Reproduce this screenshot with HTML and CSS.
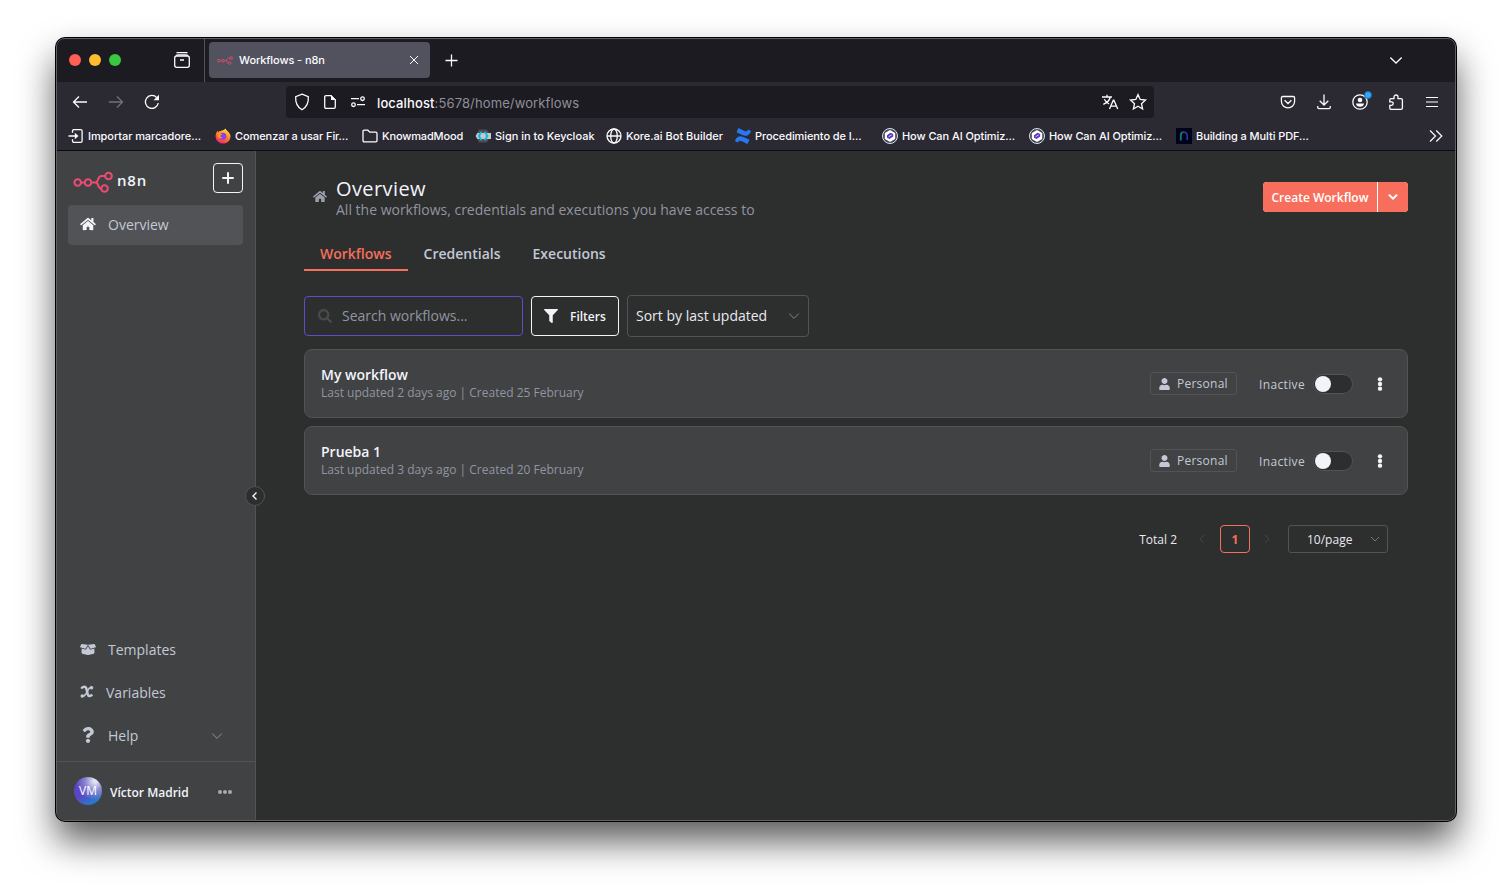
FILE: index.html
```html
<!DOCTYPE html>
<html lang="en">

<head>
  <meta charset="UTF-8" />
  <meta name="viewport" content="width=device-width, initial-scale=1.0" />
  <title>Workflows - n8n</title>
  <link rel="stylesheet" href="styles.css">
</head>

<body>
  <!-- shared icons -->
  <svg class="defs" width="0" height="0">
    <symbol id="home" viewBox="0 0 576 512"><path d="M280.37 148.26L96 300.11V464a16 16 0 0 0 16 16l112.06-.29a16 16 0 0 0 15.92-16V368a16 16 0 0 1 16-16h64a16 16 0 0 1 16 16v95.64a16 16 0 0 0 16 16.05L464 480a16 16 0 0 0 16-16V300L295.67 148.26a12.19 12.19 0 0 0-15.3 0zM571.6 251.47L488 182.56V44.05a12 12 0 0 0-12-12h-56a12 12 0 0 0-12 12v72.61L318.47 43a48 48 0 0 0-61 0L4.34 251.47a12 12 0 0 0-1.6 16.9l25.5 31A12 12 0 0 0 45.15 301l235.22-193.74a12.19 12.19 0 0 1 15.3 0L530.9 301a12 12 0 0 0 16.9-1.6l25.5-31a12 12 0 0 0-1.7-16.93z"/></symbol>
    <symbol id="user" viewBox="0 0 448 512"><path d="M224 256c70.7 0 128-57.3 128-128S294.7 0 224 0 96 57.3 96 128s57.3 128 128 128zm89.6 32h-16.7c-22.2 10.2-46.9 16-72.9 16s-50.6-5.8-72.9-16h-16.7C60.2 288 0 348.2 0 422.4V464c0 26.5 21.5 48 48 48h352c26.5 0 48-21.5 48-48v-41.6c0-74.2-60.2-134.4-134.4-134.4z"/></symbol>
    <symbol id="nodes" viewBox="0 0 40 22"><g fill="none" stroke="#ea4b71" stroke-width="2.1"><circle cx="4.7" cy="11.5" r="3.3"/><circle cx="15" cy="11.5" r="3.3"/><circle cx="35.5" cy="5" r="3.3"/><circle cx="31.5" cy="17.5" r="3.3"/><path d="M8 11.5h3.6M18.4 11.5h4.1c3.5 0 1.5-6.5 6-6.5h3.6M22.5 11.5c3.5 0 2 6 5.6 6"/></g></symbol>
    <symbol id="badge" viewBox="0 0 16 16"><circle cx="8" cy="8" r="7.5" fill="#3c4552" stroke="#dde1e8"/><path d="M8 2l5.2 3v6L8 14l-5.2-3V5z" fill="#fff"/><path d="M5 7.3l3.5-2.6 2.7 1.4v2.3L7.600 11 5 9.700z" fill="#5a35c8"/><path d="M6.600 8.700l3-1.700" stroke="#fff" stroke-width=".8"/></symbol>
    <symbol id="down" viewBox="0 0 12 12"><path d="M1.200 3.600L6 8.400l4.800-4.800" fill="none" stroke="currentColor"/></symbol>
    <symbol id="dots" viewBox="0 0 16 16"><circle cx="8" cy="2.700" r="2.500"/><circle cx="8" cy="8" r="2.500"/><circle cx="8" cy="13.300" r="2.500"/></symbol>
  </svg>

  <div class="window">
    <div class="tabbar">
      <div class="lights"><i class="red"></i><i class="yellow"></i><i class="green"></i></div>
      <svg class="line firefox-view" width="18" height="18" viewBox="0 0 18 18"><path d="M3.500 1.700h11"/><rect x="1.700" y="5" width="14.600" height="11.300" rx="2"/><path d="M3 4.700c.5-.7 1-.9 2-.9h8c1 0 1.500.2 2 .9M7 9h4"/></svg>
      <div class="separator"></div>
      <div class="tab">
        <svg width="16" height="9"><use href="#nodes"/></svg>
        <span>Workflows - n8n</span>
        <svg class="line" width="10" height="10" viewBox="0 0 10 10"><path d="M1 1l8 8M9 1L1 9" stroke-width="1"/></svg>
      </div>
      <svg class="line new-tab" width="13" height="13" viewBox="0 0 13 13"><path d="M6.500.5v12M.5 6.500h12"/></svg>
      <svg class="line all-tabs" width="14" height="14" viewBox="0 0 14 14"><path d="M1.300 4.500L7 10l5.700-5.500"/></svg>
    </div>

    <div class="toolbar">
      <div class="nav">
        <svg class="line" width="16" height="16" viewBox="0 0 16 16"><path d="M15 8H1.500M7 2.500L1.500 8 7 13.500"/></svg>
        <svg class="line dim" width="16" height="16" viewBox="0 0 16 16"><path d="M1 8h13.500M9 2.500L14.500 8 9 13.500"/></svg>
        <svg class="line" width="16" height="16" viewBox="0 0 16 16"><path d="M14.300 9A6.500 6.500 0 1 1 12.800 3.600"/><path d="M15 .8v5.500H9.500z" fill="currentColor" stroke="none"/></svg>
      </div>
      <div class="urlbar">
        <svg class="line" width="16" height="18" viewBox="0 0 16 18"><path d="M8 1.200l6.300 2.500c.4 5.300-1.100 10-6.300 13-5.200-3-6.700-7.700-6.300-13z"/></svg>
        <svg class="line page" width="14" height="16" viewBox="0 0 14 16"><path d="M3 1.700h5l4.300 4.300v7c0 .8-.5 1.300-1.300 1.300H3c-.8 0-1.300-.5-1.300-1.300V3c0-.8.5-1.300 1.300-1.300z"/><path d="M8 1l5 5H8z" fill="currentColor" stroke="none"/></svg>
        <svg class="line perms" width="16" height="12" viewBox="0 0 16 12"><path d="M1 2.700h8M7 8.700h8" stroke-width="1.300"/><circle cx="12.500" cy="2.700" r="1.800"/><circle cx="3.500" cy="8.700" r="1.800"/></svg>
        <div class="url"><b>localhost</b>:5678/home/workflows</div>
        <svg class="line translate" width="18" height="16" viewBox="0 0 18 16"><path d="M1 3h10M6 .8V3M9.300 3C8.600 6 5.500 9 2.300 10.300M3.300 5.200C4.500 7.500 6.300 9 8.200 10M8.500 15l3.800-8.800h.6L16.700 15M9.800 12.200h5.600"/></svg>
        <svg class="line" width="18" height="18" viewBox="0 0 18 18"><path d="M9 1.600l2.200 4.900 5.300.6-4 3.600 1.100 5.300L9 13.300 4.400 16l1.100-5.300-4-3.600 5.300-.6z"/></svg>
      </div>
      <div class="tools">
        <svg class="line" width="16" height="16" viewBox="0 0 16 16"><path d="M2.700 2.500h10.600c.8 0 1.300.5 1.300 1.300v3.500a6.600 6.600 0 0 1-13.200 0V3.800c0-.8.5-1.300 1.300-1.300zM4.600 6.300L8 9.500l3.400-3.200"/></svg>
        <svg class="line" width="16" height="16" viewBox="0 0 16 16"><path d="M8 .5v10.300M3.700 6.800L8 11l4.300-4.200M1.700 12v1.300c0 .9.500 1.400 1.400 1.400h9.800c.9 0 1.400-.5 1.400-1.400V12"/></svg>
        <span class="account">
          <svg class="line" width="16" height="16" viewBox="0 0 16 16"><circle cx="8" cy="8" r="7.200"/><circle cx="8" cy="6" r="2.300" fill="currentColor" stroke="none"/><path d="M4 9.500h8c0 2-1.700 3.300-4 3.300s-4-1.300-4-3.300z" fill="currentColor" stroke="none"/></svg>
          <i></i>
        </span>
        <svg class="line" width="16" height="18" viewBox="0 0 16 18"><path d="M3.200 5.700H6V4a2 2 0 0 1 4 0v1.700h3c.9 0 1.400.5 1.400 1.400v7.800c0 .9-.5 1.400-1.400 1.400H3.200c-.9 0-1.400-.5-1.400-1.400v-2.600h1.700a1.700 1.700 0 0 0 0-3.500H1.800V7.100c0-.9.500-1.400 1.400-1.400z"/></svg>
        <svg class="line burger" width="14" height="14" viewBox="0 0 14 14"><path d="M1 2.500h12M1 7h12M1 11.500h12" stroke-width="1.200"/></svg>
      </div>
    </div>

    <div class="bookmarks">
      <div class="bm bm1"><svg class="line" width="16" height="16" viewBox="0 0 16 16"><path d="M4.500 4.700V3c0-.9.500-1.400 1.400-1.400h6.800c.9 0 1.400.5 1.400 1.400v10c0 .9-.5 1.400-1.400 1.400H5.900c-.9 0-1.400-.5-1.400-1.400v-1.700M.5 8H9"/><path d="M6.800 4.700L10.500 8l-3.700 3.300z" fill="currentColor" stroke="none"/></svg>Importar marcadore...</div>
      <div class="bm bm2"><svg width="16" height="16" viewBox="0 0 16 16"><defs><linearGradient id="fox" x1=".8" y1="0" x2=".3" y2="1"><stop offset="0" stop-color="#fff044"/><stop offset=".45" stop-color="#ff8a1e"/><stop offset="1" stop-color="#f5206c"/></linearGradient></defs><path d="M10.500.5c.5 1.500 1.700 2.200 2.700 3.200 1.600 1.500 2.500 3.200 2.300 5.200A7.500 7.500 0 0 1 .6 9C.5 6.500 1.200 4.300 2.600 2.800l.5 1.500c.7-.8 1.500-1.200 2.600-1.200C7 2 9 2.500 10.500.5z" fill="url(#fox)"/><circle cx="7.900" cy="8.200" r="3.500" fill="#8a3ff0"/><path d="M3 5.500c1.500-.6 3-.2 4.200.9-1 .8-2 .6-2.100 1.600.3 1 1.300 1.300 2.400 1-1 1.900-3.900 1.600-4.700-.4z" fill="#ff9a20"/></svg>Comenzar a usar Fir...</div>
      <div class="bm bm3"><svg class="line" width="16" height="16" viewBox="0 0 16 16"><path d="M1 12.500v-9c0-.8.500-1.300 1.300-1.300h3.500l2 2h5.900c.8 0 1.300.5 1.300 1.300v7c0 .8-.5 1.300-1.300 1.300H2.300c-.8 0-1.300-.5-1.300-1.300z"/></svg>KnowmadMood</div>
      <div class="bm bm4"><svg width="16" height="16" viewBox="0 0 16 16"><path d="M4 1.500h8l2 3.500v6l-2 3.500H4L.3 8z" fill="#4d4d4d"/><path d="M2.500 5H16v6H2.500L.7 8z" fill="#c5cacd"/><path d="M5.200 3.800h2.300L5.100 8l2.400 4.200H5.200L2.700 8zM11 3.800H8.700L11.100 8l-2.400 4.200H11L13.500 8z" fill="#14b9e2"/></svg>Sign in to Keycloak</div>
      <div class="bm bm5"><svg class="line" width="16" height="16" viewBox="0 0 16 16"><circle cx="8" cy="8" r="7"/><ellipse cx="8" cy="8" rx="3.300" ry="7"/><path d="M1 8h14"/></svg>Kore.ai Bot Builder</div>
      <div class="bm bm6"><svg width="16" height="16" viewBox="0 0 16 16"><path d="M.5 11.500c2.500-4 5-4 8.500-2.200l5.500 2.500-2 4.100L7 13.300c-2-.9-3-.8-4.200 1.200L0 13z" fill="#2878f5"/><path d="M15.500 4.500c-2.500 4-5 4-8.500 2.200L1.500 4.200l2-4.100L9 2.700c2 .9 3 .8 4.200-1.200L16 3z" fill="#2878f5"/></svg>Procedimiento de I...</div>
      <div class="bm bm7"><svg width="16" height="16"><use href="#badge"/></svg>How Can AI Optimiz...</div>
      <div class="bm bm8"><svg width="16" height="16"><use href="#badge"/></svg>How Can AI Optimiz...</div>
      <div class="bm bm9"><svg width="16" height="16" viewBox="0 0 16 16"><path d="M0 0h16v16H0z" fill="#02021a"/><path d="M4.800 12.500V7.500c0-2 1-3.300 2.700-3.500" fill="none" stroke="#17736f" stroke-width="1.900"/><path d="M6.500 4.500c3-1 4.700 1 4.700 3.500v4" fill="none" stroke="#253b98" stroke-width="1.700"/></svg>Building a Multi PDF...</div>
      <svg class="line more" width="14" height="14" viewBox="0 0 14 14"><path d="M1 1.500L6.500 7 1 12.500M7.300 1.500L12.800 7l-5.500 5.500" stroke-width="1.200"/></svg>
    </div>

    <div class="app">
      <div class="sidebar">
        <div class="brand">
          <svg width="40" height="22"><use href="#nodes"/></svg>
          <span>n8n</span>
          <button class="add"><svg width="12" height="12" viewBox="0 0 12 12"><path d="M6 1v10M1 6h10" stroke="#f2f4fa" stroke-width="2" stroke-linecap="round"/></svg></button>
        </div>
        <div class="item active"><svg width="16" height="14"><use href="#home"/></svg><span>Overview</span></div>
        <div class="bottom">
          <div class="item"><svg width="16" height="13" viewBox="0 0 640 512"><path d="M425.700 256c-16.900 0-32.800-9-41.400-23.400L320 126l-64.200 106.600c-8.700 14.500-24.600 23.500-41.500 23.500-4.500 0-9-.6-13.300-1.900L64 215v178c0 14.700 10 27.500 24.200 31l216.200 54.100c10.200 2.500 20.900 2.500 31 0L551.800 424c14.200-3.600 24.200-16.400 24.200-31V215l-137 39.100c-4.300 1.300-8.800 1.900-13.300 1.900zm212.600-112.200L586.800 41c-3.100-6.200-9.800-9.800-16.700-8.900L320 64l91.700 152.100c3.800 6.300 11.400 9.300 18.500 7.300l197.900-56.500c9.900-2.900 14.700-13.900 10.200-23.100zM53.200 41L1.700 143.800c-4.600 9.200.3 20.200 10.100 23l197.900 56.500c7.100 2 14.700-1 18.500-7.300L320 64 69.800 32.100c-6.900-.8-13.500 2.700-16.600 8.900z"/></svg><span>Templates</span></div>
          <div class="item"><svg width="14" height="14" viewBox="0 0 14 14"><path d="M1.300 3.700C2.700 1.500 5.600.9 6.500 4l1.200 5.200c.6 2.600 3 2.200 4.500.2" fill="none" stroke="currentColor" stroke-width="2.500"/><path d="M11.800 2.300C9.300 1.700 8.500 4 7.200 6.600 5.800 9.500 4.800 11.800 2 11.400" fill="none" stroke="currentColor" stroke-width="1.500"/><circle cx="11.600" cy="2.800" r="1.700"/><circle cx="2.200" cy="11" r="1.700"/></svg><span>Variables</span></div>
          <div class="item"><svg width="16" height="16" viewBox="0 0 384 512"><path d="M202.021 0C122.202 0 70.503 32.703 29.914 91.026c-7.363 10.580-5.093 25.086 5.178 32.874l43.138 32.709c10.373 7.865 25.132 6.026 33.253-4.148 25.049-31.381 43.630-49.449 82.757-49.449 30.764 0 68.816 19.799 68.816 49.631 0 22.552-18.617 34.134-48.993 51.164-35.423 19.860-82.299 44.576-82.299 106.405V320c0 13.255 10.745 24 24 24h72.471c13.255 0 24-10.745 24-24v-5.773c0-42.860 125.268-44.645 125.268-160.627C377.504 66.256 286.902 0 202.021 0zM192 373.459c-38.196 0-69.271 31.075-69.271 69.271 0 38.195 31.075 69.270 69.271 69.270s69.271-31.075 69.271-69.271-31.075-69.270-69.271-69.270z"/></svg><span>Help</span><svg class="chev" width="12" height="12"><use href="#down"/></svg></div>
        </div>
        <div class="profile">
          <div class="avatar">VM</div>
          <span>Víctor Madrid</span>
          <svg width="14" height="4" viewBox="0 0 14 4"><circle cx="2" cy="2" r="2"/><circle cx="7" cy="2" r="2"/><circle cx="12" cy="2" r="2"/></svg>
        </div>
        <div class="collapse"><svg width="8" height="10" viewBox="0 0 8 10"><path d="M5.500 1.500L2 5l3.500 3.500" fill="none" stroke="#f2f4fa" stroke-width="1.400"/></svg></div>
      </div>

      <div class="main">
        <div class="header">
          <svg width="14" height="13"><use href="#home"/></svg>
          <div class="heading">
            <h1>Overview</h1>
            <p>All the workflows, credentials and executions you have access to</p>
          </div>
          <div class="create">
            <button>Create Workflow</button>
            <button class="arrow"><svg width="10" height="10" viewBox="0 0 10 10"><path d="M1.500 3.300L5 6.700l3.500-3.400" fill="none" stroke="#fff" stroke-width="2" stroke-linecap="round"/></svg></button>
          </div>
        </div>

        <div class="tabs">
          <a class="current">Workflows</a>
          <a>Credentials</a>
          <a>Executions</a>
        </div>

        <div class="filters">
          <div class="search"><svg width="14" height="14" viewBox="0 0 512 512"><path d="M505 442.700L405.300 343c-4.500-4.500-10.600-7-17-7H372c27.600-35.300 44-79.700 44-128C416 93.100 322.900 0 208 0S0 93.100 0 208s93.100 208 208 208c48.300 0 92.700-16.400 128-44v16.300c0 6.400 2.500 12.500 7 17l99.700 99.700c9.400 9.400 24.600 9.400 33.900 0l28.300-28.300c9.400-9.400 9.400-24.600.1-34zM208 336c-70.700 0-128-57.200-128-128 0-70.700 57.200-128 128-128 70.700 0 128 57.200 128 128 0 70.700-57.200 128-128 128z"/></svg><span>Search workflows...</span></div>
          <button class="filter"><svg width="14" height="14" viewBox="0 0 512 512"><path d="M487.976 0H24.028C2.710 0-8.047 25.866 7.058 40.971L192 225.941V432c0 7.831 3.821 15.170 10.237 19.662l80 55.980C298.020 518.690 320 507.493 320 487.980V225.941l184.947-184.970C520.021 25.896 509.338 0 487.976 0z"/></svg>Filters</button>
          <div class="select"><span>Sort by last updated</span><svg width="12" height="12"><use href="#down"/></svg></div>
        </div>

        <div class="card">
          <div class="info">
            <h2>My workflow</h2>
            <p>Last updated 2 days ago | Created 25 February</p>
          </div>
          <div class="owner"><svg width="11" height="12"><use href="#user"/></svg>Personal</div>
          <span class="status">Inactive</span>
          <div class="switch"><i></i></div>
          <svg class="menu" width="16" height="14"><use href="#dots"/></svg>
        </div>
        <div class="card">
          <div class="info">
            <h2>Prueba 1</h2>
            <p>Last updated 3 days ago | Created 20 February</p>
          </div>
          <div class="owner"><svg width="11" height="12"><use href="#user"/></svg>Personal</div>
          <span class="status">Inactive</span>
          <div class="switch"><i></i></div>
          <svg class="menu" width="16" height="14"><use href="#dots"/></svg>
        </div>

        <div class="pagination">
          <span class="total">Total 2</span>
          <svg class="prev" width="10" height="10"><use href="#down"/></svg>
          <b>1</b>
          <svg class="next" width="10" height="10"><use href="#down"/></svg>
          <div class="size"><span>10/page</span><svg width="10" height="10"><use href="#down"/></svg></div>
        </div>
      </div>
    </div>
  </div>
</body>

</html>
```
FILE: styles.css
```css
* {
  box-sizing: border-box;
}

body {
  margin: 0;
  padding: 38px 56px 0;
  height: 895px;
  overflow: hidden;
  background: #fff;
  font-family: "Open Sans", sans-serif;
}

h1,
h2,
p {
  margin: 0;
}

button {
  padding: 0;
  border: none;
  font-family: inherit;
}

svg {
  flex: none;
  fill: currentColor;
}

.defs {
  position: absolute;
}

.line {
  fill: none;
  stroke: currentColor;
  stroke-width: 1.3;
}

.window {
  width: 1400px;
  height: 783px;
  display: flex;
  flex-direction: column;
  border: 1px solid #606163;
  border-radius: 9px;
  overflow: hidden;
  background: #2b2a33;
  color: #fbfbfe;
  box-shadow: 0 0 0 1px #000, 0 20px 36px rgba(0, 0, 0, 0.65);
}

/* browser chrome */
.tabbar,
.toolbar,
.bookmarks {
  display: flex;
  align-items: center;
  flex: none;
  font-family: Inter, sans-serif;
}

.tabbar {
  height: 43px;
  padding-bottom: 1px;
  background: #1c1b22;
}

.lights {
  display: flex;
  gap: 8px;
  margin-left: 12px;
}

.lights i {
  width: 12px;
  height: 12px;
  border-radius: 50%;
}

.red {
  background: #ff5f57;
}

.yellow {
  background: #febc2e;
}

.green {
  background: #3ac840;
}

.firefox-view {
  margin-left: 52px;
}

.separator {
  width: 1px;
  height: 43px;
  margin: 0 4px 0 13px;
  background: #52525b;
}

.tab {
  display: flex;
  align-items: center;
  width: 221px;
  height: 36px;
  padding: 0 11px 0 8px;
  border-radius: 4px;
  background: #52525e;
  font-size: 11px;
  font-weight: 500;
  letter-spacing: -0.1px;
}

.tab span {
  flex: 1;
  margin-left: 6px;
}

.new-tab {
  margin-left: 15px;
}

.all-tabs {
  margin-left: auto;
  margin-right: 52px;
}

.toolbar {
  height: 40px;
}

.nav {
  display: flex;
  gap: 20px;
  width: 229px;
  padding-left: 15px;
}

.dim {
  color: #72717a;
}

.urlbar {
  display: flex;
  align-items: center;
  gap: 12px;
  width: 868px;
  height: 32px;
  padding: 0 7px 0 8px;
  border-radius: 4px;
  background: #1c1b22;
}

.page {
  margin-left: 1px;
}

.perms {
  margin-left: 1px;
}

.translate {
  margin-right: -2px;
}

.url {
  flex: 1;
  margin: 2px 0 0 -1px;
  font-size: 13px;
  letter-spacing: 0.12px;
  color: #8f8f98;
}

.url b {
  font-weight: 500;
  color: #fbfbfe;
}

.tools {
  display: flex;
  align-items: center;
  gap: 20px;
  margin-left: 126px;
}

.burger {
  margin-left: 1px;
}

.account {
  position: relative;
  display: flex;
}

.account i {
  position: absolute;
  top: -3px;
  right: -4px;
  width: 8px;
  height: 8px;
  border: 1px solid #1f6ea8;
  border-radius: 50%;
  background: #2fa8ff;
}

.bookmarks {
  height: 29px;
  padding: 0 12px 0 11px;
  border-bottom: 1px solid #0c0c0d;
  font-size: 11px;
  font-weight: 500;
  letter-spacing: -0.08px;
}

.bm {
  display: flex;
  align-items: center;
  gap: 4px;
  flex: none;
  width: 147px;
  white-space: nowrap;
}

.bm3 {
  width: 113px;
  letter-spacing: -0.15px;
}

.bm4 {
  width: 131px;
  letter-spacing: 0;
}

.bm5 {
  width: 129px;
  letter-spacing: 0;
}

.more {
  margin-left: auto;
}

/* n8n */
.app {
  display: flex;
  flex: 1;
  min-height: 0;
}

.sidebar {
  position: relative;
  display: flex;
  flex-direction: column;
  width: 199px;
  border-right: 1px solid #525356;
  background: #414244;
  color: #c3c9d5;
}

.brand {
  display: flex;
  align-items: center;
  height: 54px;
  padding: 0 12px 0 16px;
  color: #f2f4fa;
  font-size: 15px;
  font-weight: 600;
  letter-spacing: 0.8px;
}

.brand span {
  flex: 1;
  margin: 4px 0 0 4px;
}

.brand > svg {
  margin-top: 7px;
}

.add {
  display: flex;
  align-items: center;
  justify-content: center;
  width: 30px;
  height: 30px;
  border: 1px solid #f2f4fa;
  border-radius: 4px;
  background: none;
}

.item {
  display: flex;
  align-items: center;
  height: 40px;
  margin: 0 12px 3px 11px;
  padding: 0 20px 2px 12px;
  font-size: 14px;
  border-radius: 4px;
}

.item span {
  margin-left: 12px;
}

.item .chev {
  margin: 2px 0 0 auto;
  color: #909298;
}

.active {
  background: #525356;
}

.active svg {
  color: #f2f4fa;
}

.bottom {
  margin-top: auto;
  padding-bottom: 2px;
}

.profile {
  display: flex;
  align-items: center;
  height: 59px;
  padding: 0 23px 0 17px;
  border-top: 1px solid #525356;
}

.profile span {
  flex: 1;
  margin: 2px 0 0 8px;
  color: #f2f4fa;
  font-size: 12px;
  font-weight: 600;
}

.profile > svg {
  margin-top: 2px;
  color: #a5a9b3;
}

.avatar {
  width: 28px;
  height: 28px;
  border-radius: 50%;
  background: radial-gradient(circle at 75% 15%, #dfe3f3 5%, rgba(160, 165, 215, 0.7) 30%, transparent 60%), linear-gradient(150deg, #5c45c4 50%, #2b75cc 80%);
  color: #fff;
  font-size: 12px;
  font-weight: 500;
  line-height: 27px;
  text-align: center;
}

.collapse {
  position: absolute;
  right: -10px;
  top: 335px;
  display: flex;
  align-items: center;
  justify-content: center;
  width: 20px;
  height: 20px;
  border: 1px solid #525356;
  border-radius: 50%;
  background: #2d2e2e;
}

.main {
  flex: 1;
  padding: 0 47px 0 48px;
  background: #2d2e2e;
}

.header {
  display: flex;
  align-items: flex-start;
  padding: 26px 0 0 9px;
}

.header > svg {
  margin-top: 13px;
  color: #9a9fac;
}

.heading {
  flex: 1;
  margin-left: 9px;
}

h1 {
  color: #f2f4fa;
  font-size: 20px;
  font-weight: 500;
  line-height: 24px;
  letter-spacing: 0.4px;
}

.heading p {
  margin-bottom: 1px;
  color: #9195a0;
  font-size: 14px;
  line-height: 18px;
}

.create {
  display: flex;
  gap: 1px;
  height: 30px;
  margin-top: 5px;
  border-radius: 4px;
  overflow: hidden;
  background: #fff;
}

.create button {
  width: 114px;
  background: #f76f5c;
  color: #fff;
  font-size: 12px;
  font-weight: 600;
}

.create .arrow {
  width: 30px;
}

.tabs {
  display: flex;
  margin-top: 16px;
}

.tabs a {
  height: 35px;
  padding: 0 16px;
  color: #c3c9d5;
  font-size: 14px;
  font-weight: 600;
  line-height: 35px;
}

.tabs .current {
  border-bottom: 2px solid #f76f5c;
  color: #f76f5c;
}

.filters {
  display: flex;
  align-items: center;
  gap: 8px;
  margin: 24px 0 12px;
}

.search,
.filter,
.select {
  display: flex;
  align-items: center;
  height: 40px;
  border: 1px solid #525356;
  border-radius: 4px;
}

.search {
  width: 219px;
  padding-left: 13px;
  border-color: #5d4dc6;
  color: #484a4d;
}

.search span {
  margin: -2px 0 0 10px;
  color: #9195a0;
  font-size: 14px;
}

.filter {
  width: 88px;
  padding-left: 12px;
  gap: 12px;
  border-color: #f2f4fa;
  background: none;
  color: #f2f4fa;
  font-size: 12px;
  font-weight: 600;
}

.select {
  justify-content: space-between;
  width: 182px;
  height: 42px;
  padding: 0 8px;
  color: #e8eaf0;
  font-size: 14px;
}

.select span {
  margin-top: -2px;
}

.select svg,
.size svg {
  color: #85878c;
}

.card {
  display: flex;
  align-items: center;
  height: 69px;
  margin-bottom: 8px;
  padding: 0 19px 0 16px;
  border: 1px solid #525356;
  border-radius: 8px;
  background: #414244;
}

.info {
  flex: 1;
}

h2 {
  color: #f2f4fa;
  font-size: 14px;
  font-weight: 600;
  line-height: 19px;
}

.info p {
  color: #9195a0;
  font-size: 12px;
  line-height: 18px;
}

.owner {
  display: flex;
  align-items: center;
  gap: 7px;
  width: 87px;
  height: 23px;
  padding-left: 8px;
  border: 1px solid #525356;
  border-radius: 3px;
  color: #c3c9d5;
  font-size: 12px;
  font-weight: 500;
  letter-spacing: 0.25px;
}

.status {
  width: 46px;
  margin: 1px 8px 0 22px;
  color: #c3c9d5;
  font-size: 12px;
  font-weight: 500;
  letter-spacing: 0.35px;
}

.switch {
  width: 40px;
  height: 20px;
  padding: 1px;
  border: 1px solid #525356;
  border-radius: 10px;
  background: #2d2e2e;
}

.switch i {
  display: block;
  width: 16px;
  height: 16px;
  border-radius: 50%;
  background: #f2f4fa;
}

.menu {
  margin-left: 19px;
  color: #f2f4fa;
}

.pagination {
  display: flex;
  align-items: center;
  justify-content: flex-end;
  margin-top: 30px;
  padding-right: 20px;
  color: #e8eaf0;
  font-size: 12px;
}

.pagination b {
  width: 30px;
  height: 28px;
  border: 1px solid #f76f5c;
  border-radius: 4px;
  color: #f76f5c;
  line-height: 27px;
  text-align: center;
}

.prev,
.next {
  color: #4a4b4d;
}

.prev {
  margin: 0 13px 0 20px;
  transform: rotate(90deg);
}

.next {
  margin: 0 16px 0 12px;
  transform: rotate(-90deg);
}

.size {
  display: flex;
  align-items: center;
  justify-content: space-between;
  width: 100px;
  height: 28px;
  padding: 0 7px 0 18px;
  border: 1px solid #525356;
  border-radius: 3px;
}
```
